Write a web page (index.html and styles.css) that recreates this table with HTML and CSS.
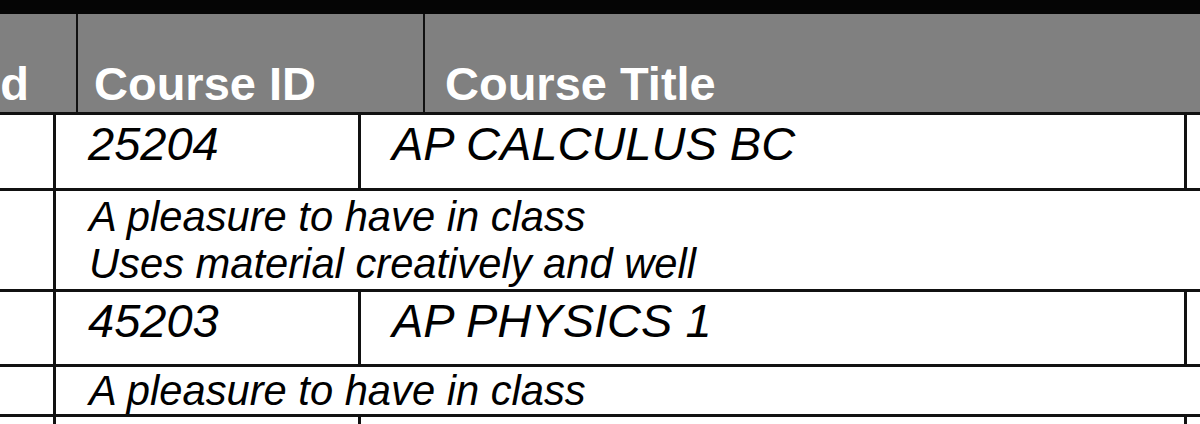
FILE: index.html
```html
<!DOCTYPE html>
<html lang="en">
<head>
<meta charset="utf-8">
<title>Report Card</title>
<link rel="stylesheet" href="styles.css">
</head>
<body>
<div class="sheet">
  <div class="topbar"></div>
  <div class="head">
    <div class="h-cell h-period"><span>Period</span></div>
    <div class="h-cell h-id">Course ID</div>
    <div class="h-cell h-title">Course Title</div>
  </div>
  <div class="row course first">
    <div class="cell blank"></div>
    <div class="cell c-id">25204</div>
    <div class="cell c-title">AP CALCULUS BC</div>
    <div class="cell c-more"></div>
  </div>
  <div class="row comment tall">
    <div class="cell blank"></div>
    <div class="cell c-text">A pleasure to have in class<br>Uses material creatively and well</div>
  </div>
  <div class="row course second">
    <div class="cell blank"></div>
    <div class="cell c-id">45203</div>
    <div class="cell c-title">AP PHYSICS 1</div>
    <div class="cell c-more"></div>
  </div>
  <div class="row comment short">
    <div class="cell blank"></div>
    <div class="cell c-text">A pleasure to have in class</div>
  </div>
  <div class="row course tail">
    <div class="cell blank"></div>
    <div class="cell c-id"></div>
    <div class="cell c-title"></div>
    <div class="cell c-more"></div>
  </div>
</div>
</body>
</html>
```
FILE: styles.css
```css
html, body {
  margin: 0;
  padding: 0;
  background: #fefefe;
  overflow: hidden;
}

.sheet {
  width: 1200px;
  height: 424px;
  font-family: "Liberation Sans", Arial, sans-serif;
  color: #000;
}

.topbar {
  height: 14px;
  background: #050505;
}

.head {
  display: grid;
  grid-template-columns: 76px 347px 1fr;
  height: 98px;
  background: #808080;
  border-bottom: 3px solid #111;
}

.h-cell {
  color: #fff;
  font-weight: bold;
  font-size: 47px;
  line-height: 52px;
  padding-top: 44px;
  white-space: nowrap;
}

.h-period {
  display: flex;
  justify-content: flex-end;
  padding-right: 47px;
}

.h-id {
  border-left: 2px solid #111;
  padding-left: 16px;
}

.h-title {
  border-left: 2px solid #111;
  padding-left: 20px;
}

.row {
  display: grid;
  grid-template-columns: 53px 305px 826px 1fr;
  border-bottom: 3px solid #111;
  background: #fff;
}

.row.comment {
  grid-template-columns: 53px 1fr;
}

.row.first { height: 73px; }
.row.tall { height: 98px; }
.row.second { height: 72px; }
.row.short { height: 47px; }
.row.tail { height: 20px; border-bottom: none; }

.cell {
  font-style: italic;
  white-space: nowrap;
}

.c-id,
.c-title,
.c-more,
.c-text {
  border-left: 3px solid #111;
}

.c-id,
.c-title {
  font-size: 47px;
  line-height: 52px;
  padding-top: 3px;
}

.c-id { padding-left: 32px; }
.c-title { padding-left: 31px; }

.c-text {
  font-size: 41.7px;
  line-height: 47px;
  padding-left: 33px;
  padding-top: 2px;
}

.row.short .c-text {
  padding-top: 0;
}
```
